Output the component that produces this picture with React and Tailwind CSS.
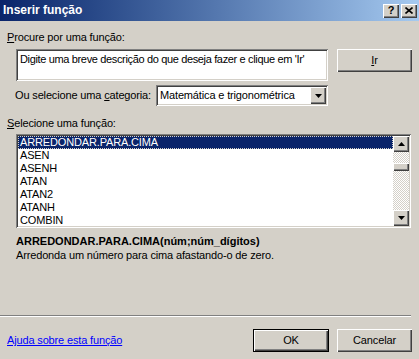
import React from 'react';

const raised =
  'shadow-[inset_1px_1px_0_#ffffff,inset_-1px_-1px_0_#404040,inset_-2px_-2px_0_#808080] bg-[#d4d0c8]';
const sunken =
  'shadow-[inset_1px_1px_0_#808080,inset_-1px_-1px_0_#ffffff,inset_2px_2px_0_#404040,inset_-2px_-2px_0_#d4d0c8]';

const ArrowUp = () => (
  <svg width="7" height="4" viewBox="0 0 7 4">
    <path d="M3.5 0L7 4H0z" fill="#000" />
  </svg>
);

const ArrowDown = () => (
  <svg width="7" height="4" viewBox="0 0 7 4">
    <path d="M0 0h7L3.5 4z" fill="#000" />
  </svg>
);

export default function App() {
  const funcs = ['ARREDONDAR.PARA.CIMA', 'ASEN', 'ASENH', 'ATAN', 'ATAN2', 'ATANH', 'COMBIN'];

  return (
    <div className="w-[419px] h-[359px] overflow-hidden bg-[#d4d0c8] text-[11px] leading-[13px] tracking-[-0.15px] text-black font-['Liberation_Sans',Arial,sans-serif] flex flex-col">
      {/* title bar */}
      <div className="h-[21px] shrink-0 flex items-center pl-[3px] pr-[2px] bg-gradient-to-r from-[#0a246a] to-[#a6caf0]">
        <span className="text-white font-bold text-[12px] tracking-normal">Inserir função</span>
        <div className="ml-auto flex gap-[2px]">
          <div className={`w-[16px] h-[14px] flex items-center justify-center font-bold text-[11px] leading-none ${raised}`}>?</div>
          <div className={`w-[16px] h-[14px] flex items-center justify-center ${raised}`}>
            <svg width="8" height="7" viewBox="0 0 8 7">
              <path d="M0.5 0.5L7.5 6.5M7.5 0.5L0.5 6.5" stroke="#000" strokeWidth="1.6" />
            </svg>
          </div>
        </div>
      </div>

      <div className="mt-[10px] ml-[7px]">
        <span className="underline">P</span>rocure por uma função:
      </div>

      <div className="mt-[5px] ml-[16px] flex items-start">
        <div className={`w-[312px] h-[32px] bg-white pl-[4px] pt-[4px] whitespace-nowrap overflow-hidden tracking-[-0.35px] ${sunken}`}>
          Digite uma breve descrição do que deseja fazer e clique em 'Ir'
        </div>
        <button className={`ml-[9px] w-[75px] h-[23px] flex items-center justify-center ${raised}`}>
          <span className="underline">I</span>r
        </button>
      </div>

      <div className="mt-[4px] ml-[15px] flex items-center">
        <span>
          Ou selecione uma <span className="underline">c</span>ategoria:
        </span>
        <div className={`ml-auto mr-[91px] w-[172px] h-[21px] bg-white flex items-center pl-[4px] pr-[2px] ${sunken}`}>
          <span>Matemática e trigonométrica</span>
          <div className={`ml-auto w-[16px] h-[17px] flex items-center justify-center ${raised}`}>
            <ArrowDown />
          </div>
        </div>
      </div>

      <div className="mt-[11px] ml-[7px]">
        <span className="underline">S</span>elecione uma função:
      </div>

      <div className={`mt-[4px] ml-[16px] w-[395px] h-[94px] bg-white p-[2px] flex ${sunken}`}>
        <div className="flex-1 flex flex-col">
          {funcs.map((f, i) => (
            <div
              key={f}
              className={`h-[13px] pl-[2px] ${
                i === 0 ? 'bg-[#0a246a] text-white outline outline-1 outline-dotted outline-[#d4d0c8] -outline-offset-1' : ''
              }`}
            >
              {f}
            </div>
          ))}
        </div>
        <div className="w-[16px] flex flex-col bg-[repeating-conic-gradient(#d4d0c8_0_25%,#ffffff_0_50%)] bg-[length:2px_2px]">
          <div className={`h-[16px] flex items-center justify-center ${raised}`}>
            <ArrowUp />
          </div>
          <div className={`mt-[11px] h-[8px] ${raised}`} />
          <div className={`mt-auto h-[16px] flex items-center justify-center ${raised}`}>
            <ArrowDown />
          </div>
        </div>
      </div>

      <div className="mt-[7px] ml-[16px] font-bold tracking-normal">ARREDONDAR.PARA.CIMA(núm;núm_dígitos)</div>
      <div className="ml-[16px] mt-[1px]">Arredonda um número para cima afastando-o de zero.</div>

      <div className="mt-auto w-[411px] border-t border-t-[#808080] border-b border-b-white" />

      <div className="mt-[12px] mb-[7px] ml-[7px] flex items-center">
        <a className="text-[#0000ff] underline">Ajuda sobre esta função</a>
        <button className="ml-auto w-[76px] h-[23px] border border-black">
          <div className={`w-full h-full flex items-center justify-center ${raised}`}>OK</div>
        </button>
        <button className={`ml-[8px] mr-[7px] w-[75px] h-[23px] flex items-center justify-center ${raised}`}>
          Cancelar
        </button>
      </div>
    </div>
  );
}
